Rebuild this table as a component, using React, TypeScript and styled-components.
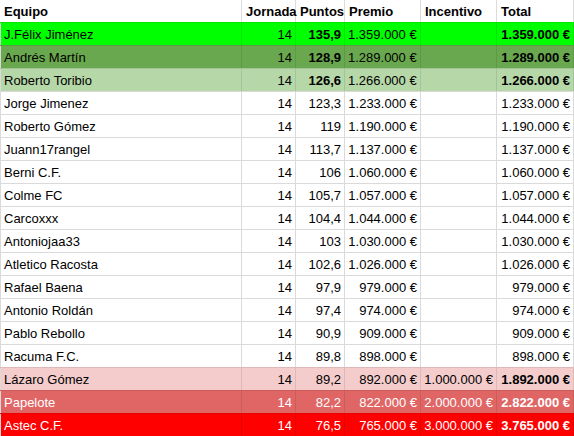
import React from 'react';
import styled, { createGlobalStyle } from 'styled-components';

const GlobalStyle = createGlobalStyle`
  html, body {
    margin: 0;
    padding: 0;
    background: #ffffff;
  }
  body {
    font-family: 'Liberation Sans', Arial, sans-serif;
    font-size: 13px;
    color: #000;
  }
`;

type Tone = 'none' | 'lime' | 'green' | 'mint' | 'pink' | 'salmon' | 'red';

const fills: Record<Tone, string> = {
  none: '#ffffff',
  lime: '#00ff00',
  green: '#6aa84f',
  mint: '#b6d7a8',
  pink: '#f4cccc',
  salmon: '#e06666',
  red: '#ff0000',
};

const Sheet = styled.div`
  display: grid;
  grid-template-columns: 242px 54px 49px 76px 76px 77px;
  width: 574px;
`;

const HeadCell = styled.div`
  height: 22px;
  box-sizing: border-box;
  display: flex;
  align-items: center;
  padding: 0 3px 0 4px;
  font-weight: 700;
  white-space: nowrap;
  border-right: 1px solid #dcdcdc;
  &:first-child {
    padding-left: 4px;
  }
`;

const Row = styled.div<{ $tone: Tone }>`
  display: contents;
  & > div {
    background: ${p => fills[p.$tone]};
    color: ${p => (p.$tone === 'salmon' || p.$tone === 'red' ? '#ffffff' : '#000000')};
    border-top: 1px solid ${p => (p.$tone === 'none' ? '#dadada' : 'rgba(0, 0, 0, 0.09)')};
    border-right: 1px solid ${p => (p.$tone === 'none' ? '#dadada' : 'rgba(0, 0, 0, 0.09)')};
  }
`;

const Cell = styled.div<{ $align?: 'left' | 'right'; $bold?: boolean }>`
  height: 23px;
  box-sizing: border-box;
  display: flex;
  align-items: center;
  justify-content: ${p => (p.$align === 'left' ? 'flex-start' : 'flex-end')};
  padding: 0 3px 0 3px;
  font-weight: ${p => (p.$bold ? 700 : 400)};
  white-space: nowrap;
`;

const NameCell = styled(Cell)`
  padding-left: 4px;
  box-shadow: inset 1px 0 0 #dadada;
`;

interface Team {
  name: string;
  puntos: string;
  premio: string;
  incentivo: string;
  total: string;
  tone: Tone;
}

const teams: Team[] = [
  { name: 'J.Félix Jiménez', puntos: '135,9', premio: '1.359.000 €', incentivo: '', total: '1.359.000 €', tone: 'lime' },
  { name: 'Andrés Martín', puntos: '128,9', premio: '1.289.000 €', incentivo: '', total: '1.289.000 €', tone: 'green' },
  { name: 'Roberto Toribio', puntos: '126,6', premio: '1.266.000 €', incentivo: '', total: '1.266.000 €', tone: 'mint' },
  { name: 'Jorge Jimenez', puntos: '123,3', premio: '1.233.000 €', incentivo: '', total: '1.233.000 €', tone: 'none' },
  { name: 'Roberto Gómez', puntos: '119', premio: '1.190.000 €', incentivo: '', total: '1.190.000 €', tone: 'none' },
  { name: 'Juann17rangel', puntos: '113,7', premio: '1.137.000 €', incentivo: '', total: '1.137.000 €', tone: 'none' },
  { name: 'Berni C.F.', puntos: '106', premio: '1.060.000 €', incentivo: '', total: '1.060.000 €', tone: 'none' },
  { name: 'Colme FC', puntos: '105,7', premio: '1.057.000 €', incentivo: '', total: '1.057.000 €', tone: 'none' },
  { name: 'Carcoxxx', puntos: '104,4', premio: '1.044.000 €', incentivo: '', total: '1.044.000 €', tone: 'none' },
  { name: 'Antoniojaa33', puntos: '103', premio: '1.030.000 €', incentivo: '', total: '1.030.000 €', tone: 'none' },
  { name: 'Atletico Racosta', puntos: '102,6', premio: '1.026.000 €', incentivo: '', total: '1.026.000 €', tone: 'none' },
  { name: 'Rafael Baena', puntos: '97,9', premio: '979.000 €', incentivo: '', total: '979.000 €', tone: 'none' },
  { name: 'Antonio Roldán', puntos: '97,4', premio: '974.000 €', incentivo: '', total: '974.000 €', tone: 'none' },
  { name: 'Pablo Rebollo', puntos: '90,9', premio: '909.000 €', incentivo: '', total: '909.000 €', tone: 'none' },
  { name: 'Racuma F.C.', puntos: '89,8', premio: '898.000 €', incentivo: '', total: '898.000 €', tone: 'none' },
  { name: 'Lázaro Gómez', puntos: '89,2', premio: '892.000 €', incentivo: '1.000.000 €', total: '1.892.000 €', tone: 'pink' },
  { name: 'Papelote', puntos: '82,2', premio: '822.000 €', incentivo: '2.000.000 €', total: '2.822.000 €', tone: 'salmon' },
  { name: 'Astec C.F.', puntos: '76,5', premio: '765.000 €', incentivo: '3.000.000 €', total: '3.765.000 €', tone: 'red' },
];

const headers = ['Equipo', 'Jornada', 'Puntos', 'Premio', 'Incentivo', 'Total'];

const App: React.FC = () => {
  return (
    <>
      <GlobalStyle />
      <Sheet>
        {headers.map(h => (
          <HeadCell key={h}>{h}</HeadCell>
        ))}
        {teams.map((t, i) => {
          const podium = i < 3;
          const bottom = i >= teams.length - 3;
          return (
            <Row key={t.name} $tone={t.tone}>
              <NameCell $align="left">{t.name}</NameCell>
              <Cell>14</Cell>
              <Cell $bold={podium}>{t.puntos}</Cell>
              <Cell $align={podium ? 'left' : 'right'}>{t.premio}</Cell>
              <Cell>{t.incentivo}</Cell>
              <Cell $bold={podium || bottom}>{t.total}</Cell>
            </Row>
          );
        })}
      </Sheet>
    </>
  );
};

export default App;
